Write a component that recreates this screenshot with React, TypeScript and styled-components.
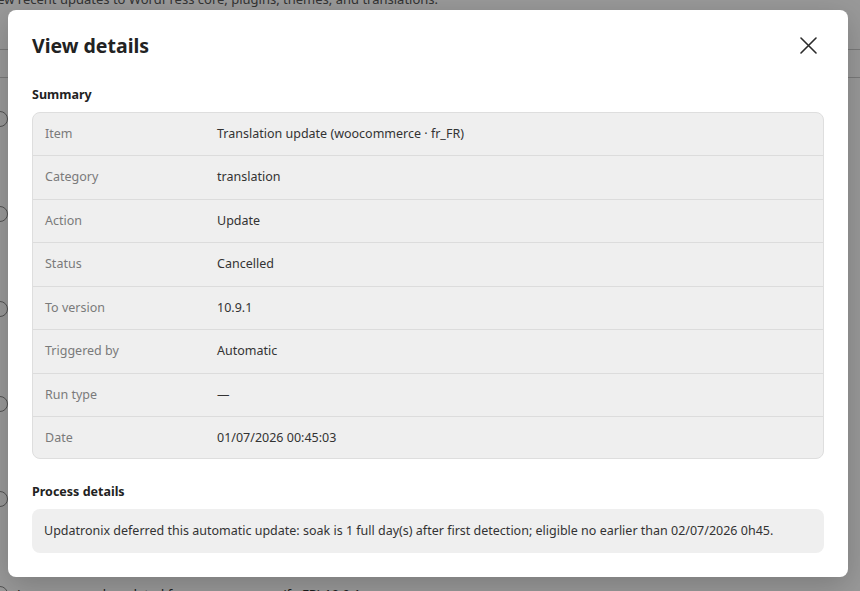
import React from "react";
import styled, { createGlobalStyle } from "styled-components";

const Global = createGlobalStyle`
  html, body { margin: 0; padding: 0; background: #fff; }
  body { font-family: "Noto Sans", "Open Sans", sans-serif; color: #2b2b2b; overflow: hidden; }
  * { box-sizing: border-box; }
`;

const Page = styled.div`
  width: 860px;
  height: 591px;
  overflow: hidden;
  position: relative;
  background: #fff;
`;

const PageIntro = styled.p`
  margin: -11px 0 0 -14px;
  font-size: 13px;
  line-height: 20px;
  color: #555;
  white-space: nowrap;
`;

const PageToolbar = styled.div`
  height: 29px;
  margin-top: 40px;
  border-top: 1px solid #ccc;
  border-bottom: 1px solid #ccc;
`;

const PageList = styled.ul`
  list-style: none;
  margin: 0;
  padding: 0;
`;

const PageItem = styled.li`
  position: relative;
  height: 95px;
  padding: 32px 0 0 17px;
  font-size: 13px;
  line-height: 18px;
  color: #333;
  white-space: nowrap;
  &::before {
    content: "";
    position: absolute;
    left: -8px;
    top: 33px;
    width: 14px;
    height: 14px;
    border: 1px solid #888;
    border-radius: 50%;
  }
`;

const Backdrop = styled.div`
  position: absolute;
  inset: 0;
  background: rgba(0, 0, 0, 0.4);
  display: flex;
  align-items: flex-start;
  padding: 10px 12px 0 8px;
`;

const Dialog = styled.div`
  width: 840px;
  height: 567px;
  background: #fff;
  border-radius: 8px;
  box-shadow: 0 8px 30px rgba(0, 0, 0, 0.2);
  padding: 0 24px 24px;
  display: flex;
  flex-direction: column;
`;

const Header = styled.div`
  display: flex;
  align-items: center;
  justify-content: space-between;
  height: 72px;
`;

const Title = styled.h2`
  margin: 0;
  font-size: 19.5px;
  font-weight: 700;
  color: #222;
`;

const CloseButton = styled.button`
  width: 32px;
  height: 32px;
  border: 0;
  background: transparent;
  display: flex;
  align-items: center;
  justify-content: center;
  padding: 0;
  cursor: pointer;
  color: #2b2b2b;
`;

const SectionTitle = styled.h3<{ $top: number }>`
  margin: ${(p) => p.$top}px 0 8px;
  font-size: 12.5px;
  line-height: 18px;
  font-weight: 700;
  color: #222;
`;

const Table = styled.div`
  background: #efefef;
  border: 1px solid #dedede;
  border-radius: 8px;
  overflow: hidden;
`;

const Row = styled.div`
  display: grid;
  grid-template-columns: 172px 1fr;
  padding: 11px 12px;
  line-height: 20.5px;
  font-size: 12.5px;
  border-bottom: 1px solid #dcdcdc;
  &:last-child { border-bottom: 0; }
`;

const Label = styled.span`
  color: #7a7a7a;
`;

const Value = styled.span`
  color: #333;
`;

const Note = styled.div`
  background: #efefef;
  border-radius: 8px;
  padding: 12px;
  font-size: 12.5px;
  line-height: 20px;
  color: #333;
`;

const rows: [string, string][] = [
  ["Item", "Translation update (woocommerce · fr_FR)"],
  ["Category", "translation"],
  ["Action", "Update"],
  ["Status", "Cancelled"],
  ["To version", "10.9.1"],
  ["Triggered by", "Automatic"],
  ["Run type", "—"],
  ["Date", "01/07/2026 00:45:03"],
];

export default function App() {
  return (
    <>
      <Global />
      <Page>
        <PageIntro>
          View recent updates to WordPress core, plugins, themes, and translations.
        </PageIntro>
        <PageToolbar />
        <PageList>
          <PageItem />
          <PageItem />
          <PageItem />
          <PageItem />
          <PageItem />
          <PageItem>Language pack updated for woocommerce (fr_FR) 10.9.1</PageItem>
        </PageList>
        <Backdrop>
          <Dialog role="dialog" aria-label="View details">
            <Header>
              <Title>View details</Title>
              <CloseButton aria-label="Close">
                <svg width="17" height="17" viewBox="0 0 17 17" fill="none">
                  <path d="M1 1 16 16M16 1 1 16" stroke="currentColor" strokeWidth="1.6" strokeLinecap="round" />
                </svg>
              </CloseButton>
            </Header>
            <SectionTitle $top={4}>Summary</SectionTitle>
            <Table>
              {rows.map(([k, v]) => (
                <Row key={k}>
                  <Label>{k}</Label>
                  <Value>{v}</Value>
                </Row>
              ))}
            </Table>
            <SectionTitle $top={24}>Process details</SectionTitle>
            <Note>
              Updatronix deferred this automatic update: soak is 1 full day(s) after first detection; eligible no earlier than 02/07/2026 0h45.
            </Note>
          </Dialog>
        </Backdrop>
      </Page>
    </>
  );
}
